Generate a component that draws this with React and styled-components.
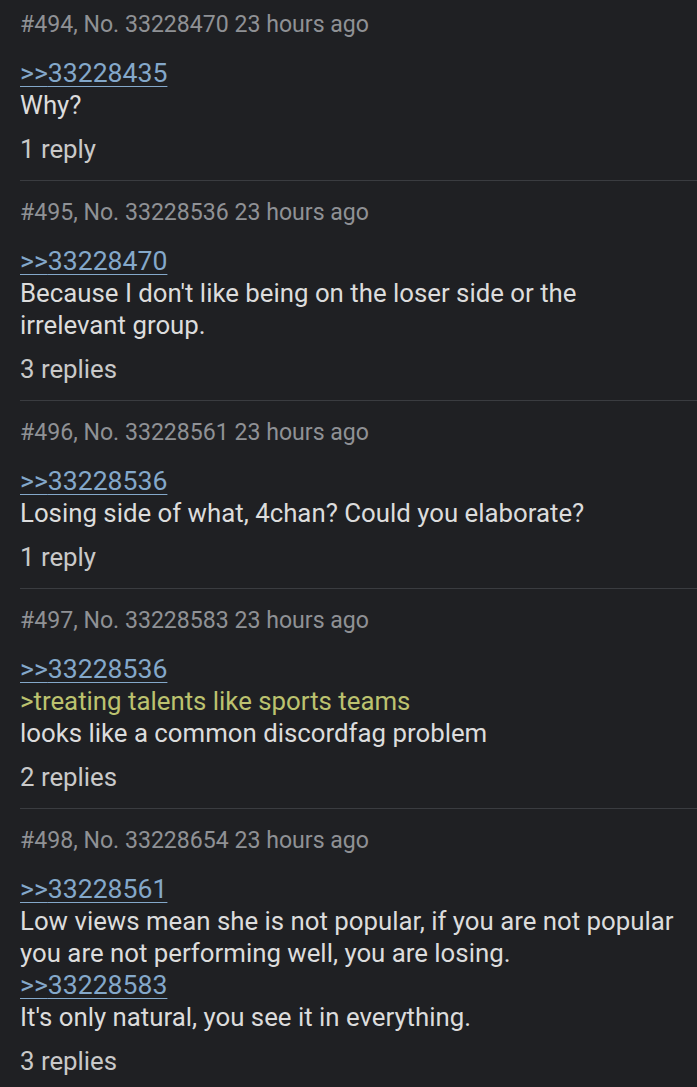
import React from "react";
import styled, { createGlobalStyle } from "styled-components";

const GlobalStyle = createGlobalStyle`
  html, body {
    margin: 0;
    padding: 0;
    background: #1f2023;
  }
  body {
    font-family: Roboto, "Liberation Sans", Arial, sans-serif;
    -webkit-font-smoothing: antialiased;
  }
`;

const Thread = styled.div`
  display: flex;
  flex-direction: column;
  padding-left: 20px;
  background: #1f2023;
  min-height: 1087px;
`;

const Post = styled.article`
  display: flex;
  flex-direction: column;
  padding: 16px 0 15px;
  border-bottom: 1px solid #3a3c40;
  &:first-child {
    padding-top: 9px;
  }
  &:last-child {
    border-bottom: none;
  }
`;

const Header = styled.div`
  font-size: 23.1px;
  line-height: 32px;
  color: #8f9195;
  margin-bottom: 16px;
  white-space: nowrap;
`;

const Body = styled.div`
  display: flex;
  flex-direction: column;
  font-size: 25.8px;
  line-height: 32px;
  color: #dcdcdc;
  padding-right: 14px;
`;

const Line = styled.div`
  color: ${(p) => (p.$green ? "#bcc26f" : "#dcdcdc")};
`;

const QuoteLink = styled.a`
  align-self: flex-start;
  font-size: 26.6px;
  color: #84a8ca;
  text-decoration: underline;
  text-decoration-thickness: 1px;
  text-underline-offset: 4px;
  cursor: pointer;
`;

const Replies = styled.div`
  margin-top: 12px;
  font-size: 25.8px;
  line-height: 32px;
  color: #c9c9c9;
`;

const posts = [
  {
    idx: 494,
    no: "33228470",
    content: [
      { t: "link", v: "33228435" },
      { t: "text", v: "Why?" },
    ],
    replies: "1 reply",
  },
  {
    idx: 495,
    no: "33228536",
    content: [
      { t: "link", v: "33228470" },
      {
        t: "text",
        v: "Because I don't like being on the loser side or the irrelevant group.",
      },
    ],
    replies: "3 replies",
  },
  {
    idx: 496,
    no: "33228561",
    content: [
      { t: "link", v: "33228536" },
      { t: "text", v: "Losing side of what, 4chan? Could you elaborate?" },
    ],
    replies: "1 reply",
  },
  {
    idx: 497,
    no: "33228583",
    content: [
      { t: "link", v: "33228536" },
      { t: "green", v: ">treating talents like sports teams" },
      { t: "text", v: "looks like a common discordfag problem" },
    ],
    replies: "2 replies",
  },
  {
    idx: 498,
    no: "33228654",
    content: [
      { t: "link", v: "33228561" },
      {
        t: "text",
        v: "Low views mean she is not popular, if you are not popular you are not performing well, you are losing.",
      },
      { t: "link", v: "33228583" },
      { t: "text", v: "It's only natural, you see it in everything." },
    ],
    replies: "3 replies",
  },
];

export default function App() {
  return (
    <>
      <GlobalStyle />
      <Thread>
        {posts.map((p) => (
          <Post key={p.idx}>
            <Header>
              #{p.idx}, No. {p.no} 23 hours ago
            </Header>
            <Body>
              {p.content.map((c, i) =>
                c.t === "link" ? (
                  <QuoteLink key={i}>&gt;&gt;{c.v}</QuoteLink>
                ) : (
                  <Line key={i} $green={c.t === "green"}>
                    {c.v}
                  </Line>
                )
              )}
            </Body>
            <Replies>{p.replies}</Replies>
          </Post>
        ))}
      </Thread>
    </>
  );
}
